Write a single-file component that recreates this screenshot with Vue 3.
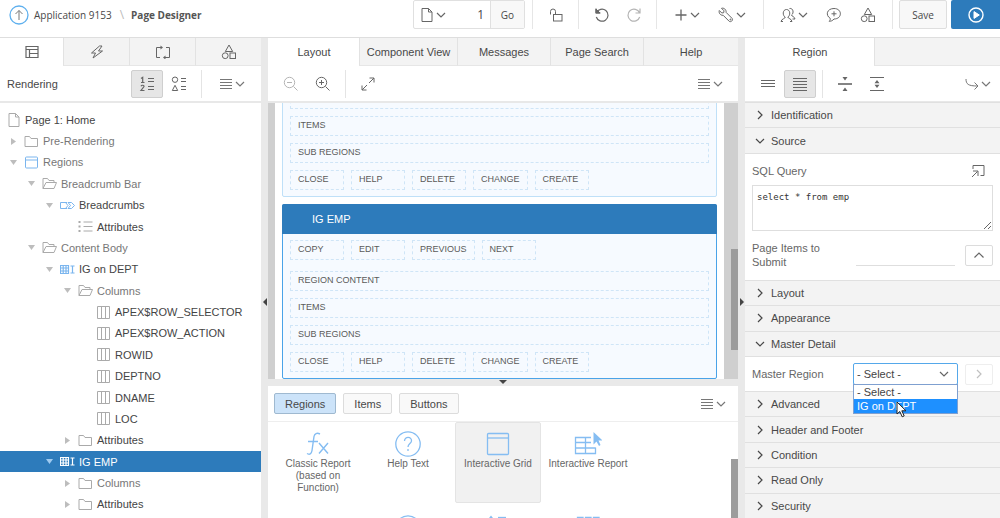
<script setup>
import { h, ref } from 'vue'

const glyphs = {
  up: [20, 20, '<circle cx="10" cy="10" r="9" stroke="#5fb0ee" stroke-width="1.3"/><path d="M10 15V5.500M6.500 9 10 5.500 13.500 9"/>'],
  file: [14, 16, '<path d="M2 1.500h6.500l3.500 3.500v9.500h-10zM8.500 1.500v3.500h3.500"/>'],
  chev: [10, 10, '<path d="m1 3 4 4 4-4" stroke-width="1.200"/>'],
  chevR: [10, 10, '<path d="m3 1 4 4-4 4" stroke-width="1.200"/>'],
  chevD: [10, 10, '<path d="m1 3 4 4 4-4" stroke-width="1.200"/>'],
  chevU: [12, 10, '<path d="m1.500 7.500 4.500-4.500 4.500 4.500" stroke-width="1.200"/>'],
  unlock: [14, 16, '<rect x="4.500" y="7.500" width="8.500" height="6.500"/><path d="M6.500 7.500V4.500a2.500 2.500 0 0 0-5 0v3"/>'],
  undo: [16, 16, '<path d="M2.500 5.800A6 6 0 1 1 2.300 10M2 1.500v4.500h4.500" stroke-width="1.200"/><path d="M2 2v4h4z" fill="currentColor"/>'],
  redo: [16, 16, '<path d="M13.500 5.800A6 6 0 1 0 13.700 10M14 1.500v4.500h-4.500" stroke-width="1.200"/>'],
  plus: [14, 14, '<path d="M7 1.500v11M1.500 7h11" stroke-width="1.300"/>'],
  wrench: [16, 16, '<path d="M3.500 1.300 6 3.800 5.700 5.700 3.800 6 1.300 3.500C.6 5.700 2 8.500 5.200 8.300l6 6c1.800 1.200 4.200-1 2.900-2.900l-6-6C8.400 2.400 5.800.6 3.500 1.300z"/><circle cx="12.400" cy="12.500" r=".5"/>'],
  people: [16, 16, '<path d="M6.500 2.500c-4.200 0-4 6.500-1.300 7.500.3 1.800-3.700 1.500-4.200 4.500M6.500 2.500c4.200 0 4 6.500 1.300 7.500.3 1.800 3.700 1.500 4.200 4.500M1 14.500h2M10 14.500h2M9.500 1.500c3.800-.8 4.700 4.800 2 6.500.3 1.600 3 1.300 3.500 4h-2.500"/>'],
  comment: [16, 16, '<path d="M8 1.500c8.500 0 8.500 10.500 0 10.500-1.500 1.800-3 2.300-4.800 2.300 1-.9 1.200-2 1-3C-.8 8.300.8 1.500 8 1.500zM8 4.300v5M5.500 6.800h5"/>'],
  shapes: [16, 16, '<path d="M8 1 11.700 7.500H4.300z"/><circle cx="4.200" cy="11.700" r="2.900"/><rect x="9" y="9" width="5.500" height="5.500"/>'],
  play: [16, 16, '<circle cx="8" cy="8" r="7" stroke-width="1.400"/><path d="M6 4.600 11.300 8 6 11.400z" fill="currentColor"/>'],
  layout: [14, 14, '<path d="M1 1.500h12v11H1zM1 4.500h12M4.500 4.500v8M4.500 8.500H13" stroke-width="1.200"/>'],
  bolt: [14, 14, '<path d="M9.500 1 1.500 8h4L3 13 12.500 6h-4L12 1z"/>'],
  cycle: [18, 14, '<path d="M6 12.500H2.500v-10H7M12 2.500h3.500v10H11"/><path d="M6.500.500 9 2.500 6.500 4.500zM11.500 10.500 9 12.500l2.500 2z" fill="currentColor" stroke="none"/>'],
  sorted: [16, 16, '<path d="M2 2.500 3.700 1.300V6.500M2 6.500h3.500M2 10.200c.6-1.400 3.300-1.200 3 .4L2 14.500h3.500M9 2.500h6M9 5.500h6M9 10.500h6M9 13.500h6" stroke-width="1.200"/>'],
  grouped: [16, 16, '<circle cx="4" cy="3.700" r="2.700"/><path d="M4 9.300 6.700 14.500H1.300zM10 2.500h5M10 5.500h5M10 10.500h5M10 13.500h5"/>'],
  lines: [12, 12, '<path d="M0 1.500h12M0 4.500h12M0 7.500h12M0 10.500h12"/>'],
  two: [14, 12, '<path d="M0 2.500h14M0 5.500h14M0 8.500h14"/>'],
  five: [14, 14, '<path d="M0 1.500h14M0 4.500h14M0 7.500h14M0 10.500h14M0 13.500h14"/>'],
  collapse: [14, 14, '<path d="M0 7h14" stroke-width="1.600"/><path d="M4.500 0h5L7 3.500zM4.500 14h5L7 10.500z" fill="currentColor" stroke="none"/>'],
  expand: [14, 14, '<path d="M0 .5h14M0 13.500h14"/><path d="M4.500 6.200h5L7 3zM4.500 7.800h5L7 11z" fill="currentColor" stroke="none"/>'],
  jump: [14, 14, '<path d="M1 2c0 5 2 7 11.500 7M9.500 5.500 13 9l-3.500 3.500"/>'],
  zoomOut: [16, 16, '<circle cx="6.500" cy="6.500" r="5.200"/><path d="m10.500 10.500 4 4M4 6.500h5"/>'],
  zoomIn: [16, 16, '<circle cx="6.500" cy="6.500" r="5.200"/><path d="m10.500 10.500 4 4M4 6.500h5M6.500 4v5"/>'],
  full: [14, 14, '<path d="M8 6 13 1M8.500 1H13v4.500M6 8l-5 5M5.500 13H1V8.500"/>'],
  closed: [15, 15, '<path d="M5 4v7l5-3.500z" fill="currentColor" stroke="none"/>'],
  open: [15, 15, '<path d="M4 5h7l-3.500 5z" fill="currentColor" stroke="none"/>'],
  folder: [15, 15, '<path d="M1 2.500h4.500l1.500 2h6.500v8H1z"/>'],
  folderOpen: [15, 15, '<path d="M1 12.500v-10h4.500l1.500 2h5v2M1 12.500l3-6h10.500l-2.500 6z"/>'],
  region: [15, 15, '<rect x="1.500" y="2" width="12" height="11" rx="1"/><path d="M1.500 5h12"/>'],
  crumbs: [15, 15, '<path d="M7 4.500H.5v6H7M5.500 4.500 8 7.500l-2.500 3M8 4.500h3.500l3 3-3 3H8l2.500-3z"/>'],
  list: [15, 15, '<path d="M5.500 3h9M5.500 7.500h9M5.500 12h9"/><path d="M.5 2h2v2h-2zM.5 6.500h2v2h-2zM.5 11h2v2h-2z" fill="currentColor" stroke="none"/>'],
  grid: [15, 15, '<path d="M.5 3.500h8v8h-8zM.5 6h8M.5 9h8M3.200 3.500v8M6 3.500v8M10.500 4h4M12.500 4v7M10.500 11h4" stroke-width="1.200"/>'],
  column: [15, 15, '<path d="M1.500 1.500h12v12h-12zM5.500 1.500v12M9.500 1.500v12"/>'],
  popout: [14, 14, '<path d="M2 5V1.500h11v10H9.500M1 13l5.500-5.500M2 7h5v5"/>'],
  fx: [26, 26, '<path d="M2 22.500c2.500 1.500 4.500.5 5-3L9 5.500C9.500 2.500 12 1.500 15 3M3 10.500h10M14 12l9 10.500M23 12l-9 10.500" stroke-width="1.400"/>'],
  help: [26, 26, '<circle cx="13" cy="13" r="12.200" stroke-width="1.300"/><path d="M9.500 10c0-5 7.500-4.500 7 0-.3 2.500-3.500 2.700-3.500 6M13 18v2" stroke-width="1.300"/>'],
  bigGrid: [26, 26, '<rect x="2.500" y="2.500" width="21" height="21" rx="1" stroke-width="1.300"/><path d="M2.500 7h21" stroke-width="1.300"/>'],
  report: [28, 26, '<path d="M17 6.500H1.500v16h20v-6M1.500 11.500H17M1.500 17h20M11.500 6.500v16" stroke-width="1.300"/><path d="M19.500 1v12.500l3-3 2.500 4.500 1.500-1-2-4.500h4z" fill="currentColor" stroke="none"/>'],
  updown: [26, 26, '<path d="M6 2v18" stroke-width="1.300"/><path d="M2.500 5 6 .5 9.500 5z" fill="currentColor" stroke="none"/><path d="M13 2.500h8" stroke-width="1.300"/>'],
  cards: [26, 26, '<path d="M2.500 2.500H8V8H2.500zM10.500 2.500H16V8h-5.500zM18.500 2.500H24V8h-5.500z" stroke-width="1.300"/>'],
  pointer: [11, 17, '<path d="M1 1v12l2.800-2.500 2.400 5.300 2-.9-2.400-5.100H10z" fill="#fff" stroke="#222"/>'],
}

const Icon = ({ name }) => {
  const [w, ht, body] = glyphs[name]
  return h('svg', {
    class: 'icon', width: w, height: ht, viewBox: `0 0 ${w} ${ht}`,
    fill: 'none', stroke: 'currentColor', 'stroke-width': 1, 'aria-hidden': 'true', innerHTML: body,
  })
}
Icon.props = ['name']

const leftTabs = [['Rendering', 'layout'], ['Dynamic Actions', 'bolt'], ['Processing', 'cycle'], ['Shared Components', 'shapes']]

// d: indent steps, s: twisty state, t: label
const tree = [
  { d: 0, icon: 'file', t: 'Page 1: Home' },
  { d: 0, s: 'closed', icon: 'folder', t: 'Pre-Rendering', dim: true },
  { d: 0, s: 'open', icon: 'region', t: 'Regions', dim: true, blue: true },
  { d: 1, s: 'open', icon: 'folderOpen', t: 'Breadcrumb Bar', dim: true },
  { d: 2, s: 'open', icon: 'crumbs', t: 'Breadcrumbs', blue: true },
  { d: 4, icon: 'list', t: 'Attributes' },
  { d: 1, s: 'open', icon: 'folderOpen', t: 'Content Body', dim: true },
  { d: 2, s: 'open', icon: 'grid', t: 'IG on DEPT', blue: true },
  { d: 3, s: 'open', icon: 'folderOpen', t: 'Columns', dim: true },
  { d: 5, icon: 'column', t: 'APEX$ROW_SELECTOR' },
  { d: 5, icon: 'column', t: 'APEX$ROW_ACTION' },
  { d: 5, icon: 'column', t: 'ROWID' },
  { d: 5, icon: 'column', t: 'DEPTNO' },
  { d: 5, icon: 'column', t: 'DNAME' },
  { d: 5, icon: 'column', t: 'LOC' },
  { d: 3, s: 'closed', icon: 'folder', t: 'Attributes' },
  { d: 2, s: 'open', icon: 'grid', t: 'IG EMP', sel: true },
  { d: 3, s: 'closed', icon: 'folder', t: 'Columns', dim: true },
  { d: 3, s: 'closed', icon: 'folder', t: 'Attributes' },
]

const centerTabs = ['Layout', 'Component View', 'Messages', 'Page Search', 'Help']
const topSlots = ['COPY', 'EDIT', 'PREVIOUS', 'NEXT']
const areas = ['REGION CONTENT', 'ITEMS', 'SUB REGIONS']
const bottomSlots = ['CLOSE', 'HELP', 'DELETE', 'CHANGE', 'CREATE']
const kinds = ['Regions', 'Items', 'Buttons']
const cells = [
  ['fx', 'Classic Report (based on Function)'], ['help', 'Help Text'],
  ['bigGrid', 'Interactive Grid'], ['report', 'Interactive Report'],
]
const nextCells = [null, 'help', 'updown', 'cards']
const afterSource = ['Layout', 'Appearance']
const afterMaster = ['Advanced', 'Header and Footer', 'Condition', 'Read Only', 'Security']

const pageNo = ref('1')
const sql = ref('select * from emp')
const pageItems = ref('')
const master = ref('- Select -')
</script>

<template>
  <div class="app">
    <header class="top">
      <nav class="crumb">
        <a href="#" class="home" aria-label="Up"><Icon name="up" /></a>
        <a href="#">Application 9153</a>
        <span class="slash">\</span>
        <b>Page Designer</b>
      </nav>
      <div class="page-box">
        <button class="flat pair" aria-label="Page"><Icon name="file" /><Icon name="chev" /></button>
        <input v-model="pageNo" aria-label="Page number">
        <button class="go">Go</button>
      </div>
      <div class="group lock"><button class="flat" aria-label="Lock"><Icon name="unlock" /></button></div>
      <div class="group history">
        <button class="flat" aria-label="Undo"><Icon name="undo" /></button>
        <button class="flat off" aria-label="Redo"><Icon name="redo" /></button>
      </div>
      <div class="group create">
        <button class="flat pair" aria-label="Create"><Icon name="plus" /><Icon name="chev" /></button>
        <button class="flat pair" aria-label="Utilities"><Icon name="wrench" /><Icon name="chev" /></button>
      </div>
      <div class="group team">
        <button class="flat pair" aria-label="Team"><Icon name="people" /><Icon name="chev" /></button>
        <button class="flat" aria-label="Comment"><Icon name="comment" /></button>
        <button class="flat" aria-label="Shared components"><Icon name="shapes" /></button>
      </div>
      <div class="actions">
        <button class="save">Save</button>
        <button class="run" aria-label="Run"><Icon name="play" /></button>
      </div>
    </header>

    <main class="body">
      <section class="left">
        <div class="tabs">
          <button v-for="(t, i) in leftTabs" :key="t[0]" class="tab" :class="{ on: i === 0 }" :aria-label="t[0]"><Icon :name="t[1]" /></button>
        </div>
        <div class="tools">
          <span class="title">Rendering</span>
          <button class="tool on" aria-label="Order"><Icon name="sorted" /></button>
          <button class="tool" aria-label="Group"><Icon name="grouped" /></button>
          <i class="rule" />
          <button class="flat pair menu" aria-label="Menu"><Icon name="lines" /><Icon name="chev" /></button>
        </div>
        <ul class="tree" role="tree">
          <li v-for="(n, i) in tree" :key="i" role="treeitem" :class="{ dim: n.dim, blue: n.blue, sel: n.sel }">
            <span class="node" :style="{ paddingLeft: n.d * 18 + 6 + 'px' }">
              <Icon v-if="n.s" class="twist" :name="n.s" />
              <span class="kind"><Icon :name="n.icon" /></span>
              <span>{{ n.t }}</span>
            </span>
          </li>
        </ul>
      </section>

      <div class="split"><i class="arrow west" /></div>

      <section class="center">
        <div class="tabs center-tabs">
          <button v-for="(t, i) in centerTabs" :key="t" class="tab" :class="{ on: i === 0 }">{{ t }}</button>
        </div>
        <div class="tools zooms">
          <button class="flat off" aria-label="Zoom out"><Icon name="zoomOut" /></button>
          <button class="flat" aria-label="Zoom in"><Icon name="zoomIn" /></button>
          <i class="rule" />
          <button class="flat" aria-label="Expand"><Icon name="full" /></button>
          <button class="flat pair menu end" aria-label="Menu"><Icon name="lines" /><Icon name="chev" /></button>
        </div>
        <div class="canvas">
          <div class="regions">
            <div class="region">
              <div class="slot wide" />
              <div v-for="a in areas.slice(1)" :key="a" class="slot wide">{{ a }}</div>
              <div class="slots"><div v-for="b in bottomSlots" :key="b" class="slot">{{ b }}</div></div>
            </div>
            <div class="region picked">
              <h2>IG EMP</h2>
              <div class="slots first"><div v-for="b in topSlots" :key="b" class="slot">{{ b }}</div></div>
              <div v-for="a in areas" :key="a" class="slot wide">{{ a }}</div>
              <div class="slots"><div v-for="b in bottomSlots" :key="b" class="slot">{{ b }}</div></div>
            </div>
          </div>
          <div class="track"><i class="thumb" /></div>
        </div>
        <div class="split-h"><i class="arrow south" /></div>
        <div class="gallery">
          <div class="tools kinds">
            <button v-for="(k, i) in kinds" :key="k" class="kind-btn" :class="{ on: i === 0 }">{{ k }}</button>
            <button class="flat pair menu end" aria-label="Menu"><Icon name="lines" /><Icon name="chev" /></button>
          </div>
          <div class="shelf">
            <div class="cards">
              <div v-for="(g, i) in cells" :key="g[1]" class="card" :class="{ on: i === 2 }"><Icon :name="g[0]" /><span>{{ g[1] }}</span></div>
              <div v-for="(n, i) in nextCells" :key="i" class="card"><Icon v-if="n" :name="n" /></div>
            </div>
            <i class="thumb low" />
          </div>
        </div>
      </section>

      <div class="split"><i class="arrow east" /></div>

      <section class="right">
        <div class="tabs right-tabs"><button class="tab on">Region</button><span class="tab" /></div>
        <div class="tools props">
          <button class="tool" aria-label="Show common"><Icon name="two" /></button>
          <button class="tool on" aria-label="Show all"><Icon name="five" /></button>
          <i class="rule" />
          <button class="tool" aria-label="Collapse all"><Icon name="collapse" /></button>
          <button class="tool" aria-label="Expand all"><Icon name="expand" /></button>
          <button class="flat pair end" aria-label="Go to"><Icon name="jump" /><Icon name="chev" /></button>
        </div>
        <div class="accordion">
          <button class="head"><Icon name="chevR" />Identification</button>
          <button class="head"><Icon name="chevD" />Source</button>
          <div class="source">
            <div class="line">
              <label for="sql">SQL Query</label>
              <button class="flat" aria-label="Code editor"><Icon name="popout" /></button>
            </div>
            <textarea id="sql" v-model="sql" spellcheck="false" />
            <div class="line items">
              <label for="items">Page Items to Submit</label>
              <input id="items" v-model="pageItems">
              <button class="box" aria-label="Pick items"><Icon name="chevU" /></button>
            </div>
          </div>
          <button v-for="a in afterSource" :key="a" class="head"><Icon name="chevR" />{{ a }}</button>
          <button class="head"><Icon name="chevD" />Master Detail</button>
          <div class="master">
            <label for="master">Master Region</label>
            <div class="combo">
              <select id="master" v-model="master"><option>- Select -</option><option>IG on DEPT</option></select>
              <Icon name="chevD" class="caret" />
              <ul class="options"><li>- Select -</li><li class="hot">IG on DEPT</li></ul>
              <Icon name="pointer" class="pointer" />
            </div>
            <button class="box off" aria-label="Go to region"><Icon name="chevR" /></button>
          </div>
          <button v-for="a in afterMaster" :key="a" class="head"><Icon name="chevR" />{{ a }}</button>
        </div>
      </section>
    </main>
  </div>
</template>

<style>
body { margin: 0; }
</style>

<style scoped>
* { box-sizing: border-box; }
.app { height: 100vh; display: flex; flex-direction: column; overflow: hidden; background: #fff; color: #484848; font: 11px/14px "Liberation Sans", Arial, sans-serif; }
button, input, select, textarea { font: inherit; color: inherit; margin: 0; }
button { padding: 0; background: none; border: 0; display: flex; align-items: center; justify-content: center; }
ul { list-style: none; margin: 0; padding: 0; }
.icon { display: block; flex: none; }
.flat { color: #666; }
.pair { gap: 2px; }
.off { color: #b4b4b4; }
.end { margin-left: auto; }

.top { height: 38px; flex: none; display: flex; align-items: flex-start; border-bottom: 1px solid #dedede; }
.crumb { flex: 1; display: flex; align-items: center; height: 30px; padding-left: 9px; font: 10px/14px "Open Sans", sans-serif; }
.crumb a { color: inherit; text-decoration: none; }
.crumb .home { color: #777; margin-right: 5px; }
.crumb b { color: #555; }
.slash { color: #bbb; margin: 0 7px 0 8px; font-size: 12px; }
.page-box { display: flex; width: 112px; height: 29px; border: 1px solid #e0e0e0; border-radius: 2px; margin-right: 7px; }
.page-box .pair { width: 40px; flex: none; padding-right: 2px; }
.page-box input { flex: 1; min-width: 0; border: 0; padding: 0 6px 0 0; text-align: right; font: 12px "Open Sans", sans-serif; }
.go { width: 34px; border-left: 1px solid #e0e0e0; background: #f8f8f8; font: 10px "Open Sans", sans-serif; }
.group { height: 29px; display: flex; align-items: center; justify-content: center; gap: 18px; border-left: 1px solid #e6e6e6; }
.lock { width: 46px; }
.history { width: 78px; gap: 16px; }
.create { width: 107px; }
.team { width: 129px; }
.actions { display: flex; gap: 4px; height: 29px; padding-left: 6px; border-left: 1px solid #e6e6e6; }
.save { width: 48px; border: 1px solid #dedede; border-radius: 2px; background: #f8f8f8; font: 10px "Open Sans", sans-serif; }
.run { width: 49px; background: #2d7bbb; color: #fff; border-radius: 2px 0 0 2px; }

.body { flex: 1; min-height: 0; display: grid; grid-template-columns: 261fr 7px 470fr 7px 255fr; }
.left, .center, .right { min-width: 0; min-height: 0; display: flex; flex-direction: column; }
.tabs { height: 28px; flex: none; display: grid; grid-template-columns: 63fr 66fr 66fr 66fr; }
.center-tabs { grid-template-columns: 91fr 98fr 93fr 93fr 95fr; }
.right-tabs { grid-template-columns: 129fr 126fr; }
.tab { background: #f3f3f3; border-left: 1px solid #e2e2e2; border-bottom: 1px solid #e6e6e6; }
.tab.on { background: #fff; border-color: #fff; }
.left .tab { color: #666; }
.tools { height: 37px; flex: none; display: flex; align-items: center; border-bottom: 2px solid #e8e8e8; }
.title { flex: 1; padding-left: 7px; }
.tool { width: 32px; height: 28px; color: #666; border: 1px solid transparent; border-radius: 2px; }
.tool.on { background: #e6e6e6; border-color: #cfcfcf; }
.rule { width: 1px; height: 28px; background: #e4e4e4; margin: 0 6px; }
.menu { gap: 3px; }
.left .menu { margin: 0 16px 0 12px; }
.left .tool.on { margin-left: 4px; }
.left .pair, .end { color: #777; }

.tree { flex: 1; min-height: 0; display: flex; flex-direction: column; padding: 6px 0 3px; }
.tree li { flex: 1; display: flex; align-items: center; color: #444; }
.node { display: flex; align-items: center; white-space: nowrap; }
.twist { color: #bdbdbd; margin-right: 3px; }
.kind { width: 15px; margin-right: 4px; display: flex; justify-content: center; color: #aaa; }
.tree .dim { color: #777; }
.tree .blue .kind { color: #7ab5ee; }
.tree .sel { background: #2d7bbb; color: #fff; }
.tree .sel .kind { color: #fff; }
.tree .sel .twist { color: #9fcaf0; }

.split { background: #e9e9e9; display: flex; align-items: center; justify-content: center; padding-top: 48px; }
.arrow { width: 0; height: 0; border: 4px solid transparent; }
.west { border-left: 0; border-right-color: #444; }
.east { border-right: 0; border-left-color: #444; }
.south { border-bottom: 0; border-top-color: #444; }

.zooms { padding: 0 15px 0 15px; }
.zooms .flat + .flat { margin-left: 16px; }
.zooms .rule { margin: 0 15px 0 14px; }
.zooms .flat.end { margin-left: auto; }
.canvas { flex: 1; min-height: 0; display: flex; overflow: hidden; border-left: 7px solid #cfcfcf; }
.regions { flex: 1; min-width: 0; display: flex; flex-direction: column; justify-content: flex-end; gap: 7px; padding: 0 7px; }
.region { flex: none; display: flex; flex-direction: column; gap: 7px; padding: 6px 7px; border: 1px solid #bfe0f8; background: #f6faff; border-radius: 2px; font-size: 9px; line-height: 12px; color: #5a5a5a; }
.picked { border-color: #4aa3e8; }
.region h2 { margin: -7px -8px -1px; height: 30px; padding-left: 30px; background: #2d7bbb; color: #fff; font-size: 11px; font-weight: 400; line-height: 30px; border-radius: 2px 2px 0 0; }
.slots { display: flex; gap: 7px; }
.first { margin-bottom: 4px; }
.slot { min-width: 54px; height: 20px; padding: 2px 7px; border: 1px dashed #cfe5f7; }
.track { width: 14px; background: #cfcfcf; display: flex; justify-content: flex-end; align-items: flex-end; padding-bottom: 29px; }
.thumb { width: 7px; height: 37%; min-height: 101px; background: #9c9c9c; }
.split-h { height: 7px; flex: none; background: #e9e9e9; display: flex; align-items: flex-start; justify-content: center; padding-top: 1px; }
.gallery { height: 132px; flex: none; display: flex; flex-direction: column; }
.kinds { height: 36px; gap: 7px; padding: 0 12px 0 6px; border-bottom-width: 1px; border-bottom-color: #eee; }
.kind-btn { height: 21px; padding: 0 10px; border: 1px solid #dcdcdc; border-radius: 2px; background: #f9f9f9; }
.kind-btn.on { background: #cce3f9; border-color: #9fb9d0; }
.shelf { flex: 1; min-height: 0; display: flex; justify-content: space-between; overflow: hidden; }
.cards { display: grid; grid-template-columns: repeat(4, 86px); grid-auto-rows: 81px; gap: 3px 4px; padding-left: 7px; }
.card { display: flex; flex-direction: column; align-items: center; gap: 1px; padding: 8px 4px 0; border: 1px solid transparent; border-radius: 2px; text-align: center; font-size: 10px; line-height: 12px; color: #666; }
.card .icon { color: #85bdf2; }
.card span { margin: 0 -4px; padding: 0 2px; }
.card.on { background: #f1f1f1; border-color: #e4e4e4; }
.low { height: auto; min-height: 0; margin-top: 37px; }

.props { padding: 0 9px 0 7px; }
.accordion { flex: 1; min-height: 0; display: flex; flex-direction: column; margin-top: -1px; }
.head { flex: 1; justify-content: flex-start; gap: 6px; padding-left: 10px; background: #f3f3f3; border-top: 1px solid #e0e0e0; }
.source, .master { border-top: 1px solid #e0e0e0; color: #666; }
.source { height: 127px; padding: 8px 7px 0; }
.line { display: flex; justify-content: space-between; align-items: center; padding-right: 8px; height: 18px; }
textarea { display: block; width: 100%; height: 46px; margin-top: 5px; padding: 5px 4px; border: 1px solid #dedede; font: 9px/12px "DejaVu Sans Mono", monospace; color: #333; resize: vertical; }
.items { height: 36px; margin-top: 8px; padding: 0; gap: 10px; align-items: flex-start; }
.items label { width: 94px; padding-top: 2px; }
.items input { flex: 1; min-width: 0; height: 27px; border: 0; border-bottom: 1px solid #dedede; padding: 0; }
.items .box { margin-top: 6px; }
.box { flex: none; width: 28px; height: 21px; border: 1px solid #dcdcdc; border-radius: 2px; color: #666; }
.box.off { color: #c0c0c0; border-color: #eee; }
.master { height: 35px; display: flex; align-items: center; gap: 7px; padding: 0 7px; }
.master label { flex: 1; }
.combo { position: relative; width: 105px; }
select { display: block; width: 100%; height: 22px; appearance: none; border: 1px solid #55a8ea; border-radius: 2px; background: #fff; color: #444; padding: 0 3px; }
.caret { position: absolute; right: 9px; top: 6px; }
.options { position: absolute; z-index: 2; left: 0; right: 0; top: 21px; background: #fff; border: 1px solid #7fa0d0; color: #444; }
.options li { height: 14px; padding-left: 3px; line-height: 14px; }
.options .hot { background: #1e90ff; color: #fff; }
.pointer { position: absolute; z-index: 3; left: 43px; top: 38px; }
</style>
